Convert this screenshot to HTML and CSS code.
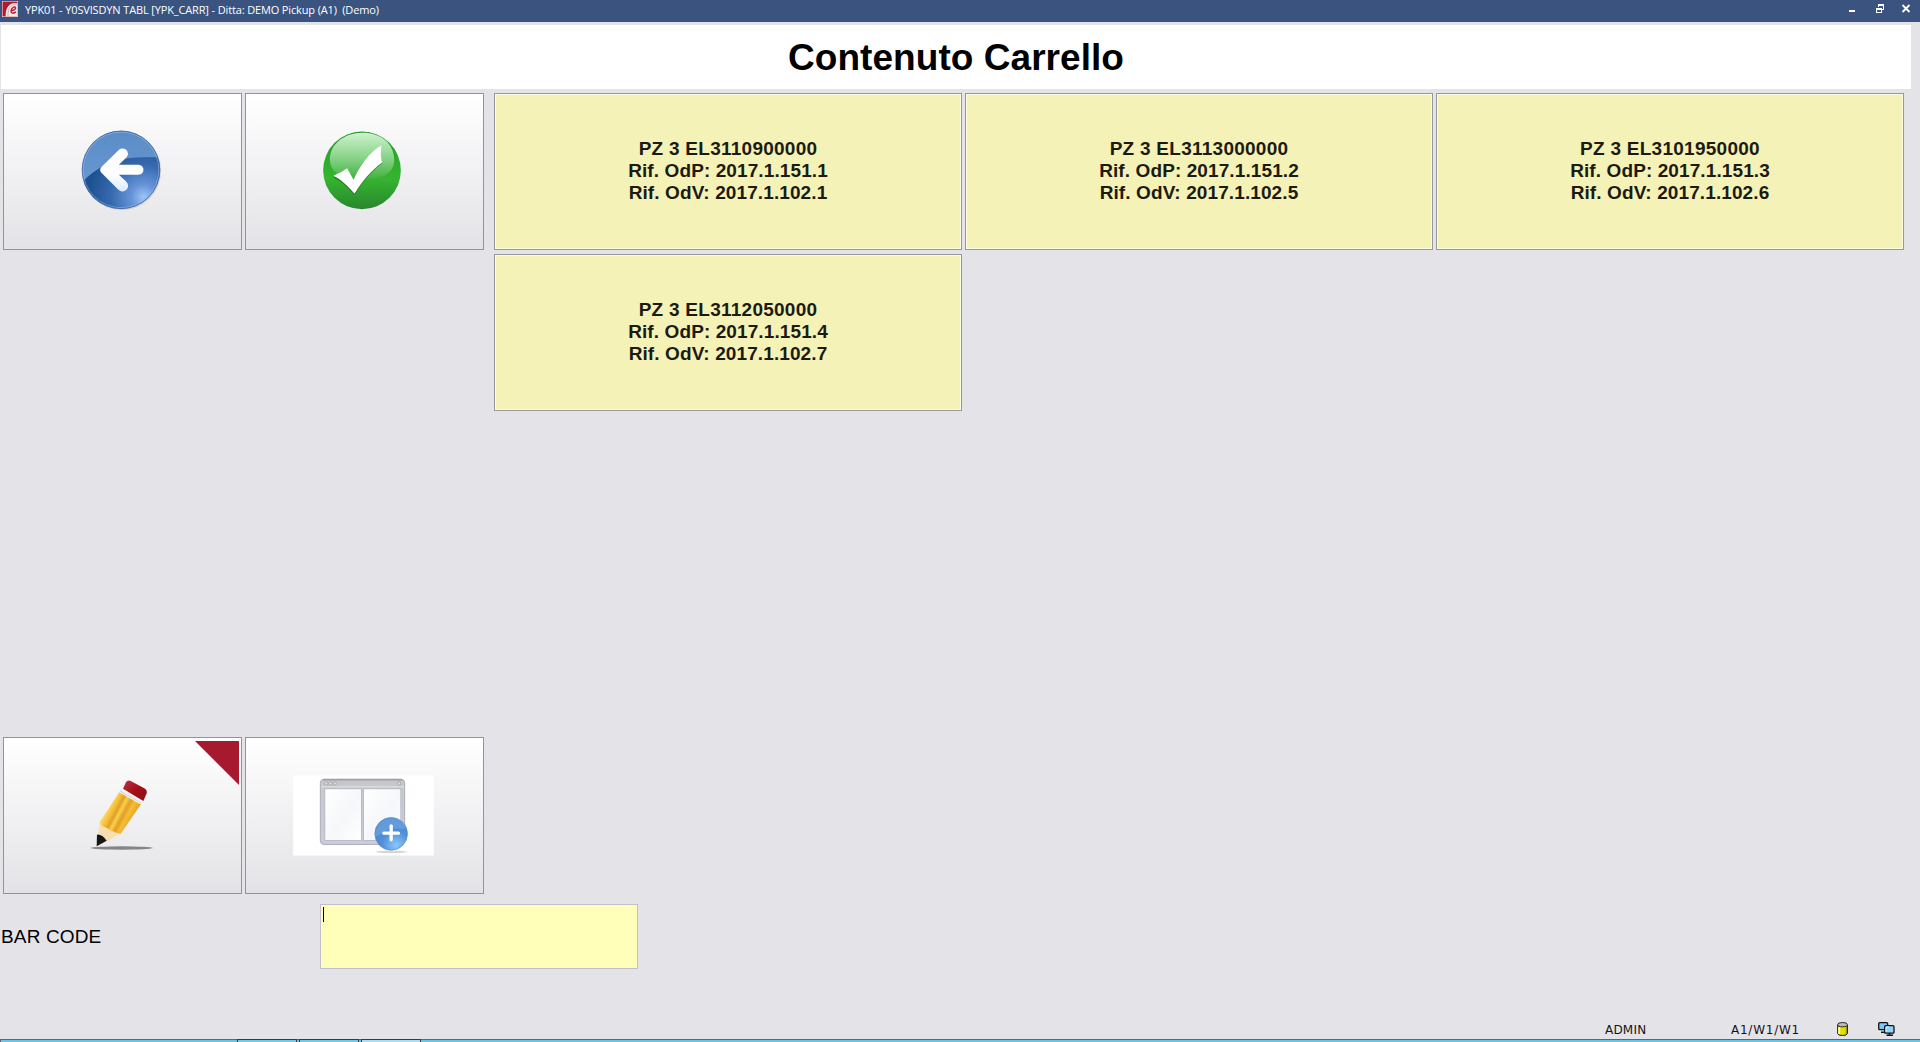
FILE: index.html
```html
<!DOCTYPE html>
<html lang="it">
<head>
<meta charset="utf-8">
<title>Contenuto Carrello</title>
<link rel="stylesheet" href="styles.css">
</head>
<body>
<div class="window">
  <header class="titlebar">
    <svg class="app-icon" viewBox="0 0 16 16">
      <rect width="16" height="16" fill="#fff"/>
      <rect x=".5" y=".5" width="15" height="15" fill="#b5162a"/>
      <path d="M15.500 2.200C8 1 3.400 5.500 3.600 15.500H15.500z" fill="#f1e8e8"/>
      <path d="M15.500 3C9 2.500 5.500 7 6 15.500" fill="none" stroke="#c78d95" stroke-width=".7"/>
      <path d="M9 9.600C12 9.500 14 8 13.500 6.500C12.800 4.800 9.200 7 9 10.200C9 12.600 11.500 12.800 14 10.900" fill="none" stroke="#b5162a" stroke-width="1.400"/>
    </svg>
    <span class="caption">YPK01 - Y0SVISDYN TABL [YPK_CARR] - Ditta: DEMO Pickup (A1)&nbsp; (Demo)</span>
    <svg class="controls" viewBox="0 0 64 12" shape-rendering="crispEdges">
      <rect x="1" y="7" width="6" height="2" fill="#fff"/>
      <path d="M30.500 4V1.500H35.500V6.500H33M30 2H36M28.500 5.500H33.500V9.500H28.500zM28 6H34" fill="none" stroke="#fff"/>
      <path d="M54.500 2L61.500 9M61.500 2L54.500 9" stroke="#fff" stroke-width="1.800" shape-rendering="auto"/>
    </svg>
  </header>

  <h1 class="heading">Contenuto Carrello</h1>

  <main class="content">
    <section class="actions">
      <button class="action">
        <svg width="100" height="100" viewBox="7.5 4.5 300 300">
          <defs>
            <linearGradient id="backTop" x1="0" y1="0" x2="0" y2="1"><stop offset="0" stop-color="#5c8cc6"/><stop offset="1" stop-color="#6c9dd6"/></linearGradient>
            <radialGradient id="backLow" gradientUnits="userSpaceOnUse" cx="222" cy="232" r="165"><stop offset="0" stop-color="#9dc4fa"/><stop offset=".22" stop-color="#6794d8"/><stop offset=".6" stop-color="#3568ad"/><stop offset="1" stop-color="#1d5292"/></radialGradient>
            <linearGradient id="arrowFill" x1="0" y1="0" x2="0" y2="1"><stop offset=".6" stop-color="#fff"/><stop offset="1" stop-color="#dceaff"/></linearGradient>
            <clipPath id="backClip"><circle cx="154.500" cy="151" r="117"/></clipPath>
          </defs>
          <circle cx="157" cy="154" r="118" fill="#bfc0c6" opacity=".6"/>
          <g clip-path="url(#backClip)">
            <rect x="36" y="32" width="238" height="240" fill="url(#backTop)"/>
            <path d="M30 196C56 168 80 150 105 137C150 115 200 112 280 114V280H30z" fill="url(#backLow)"/>
          </g>
          <circle cx="154.500" cy="151" r="113.500" fill="none" stroke="#a9c8ec" stroke-width="2" opacity=".7"/>
          <circle cx="154.500" cy="151" r="116.500" fill="none" stroke="#3f67a3" stroke-width="2.500"/>
          <path d="M95 143L147 92C154 84 170 86 174 97C177 104 175 109 170 115L148 136H207C227 138 227 165 207 166H148L170 186C183 200 172 217 157 216C151 215 147 211 143 207L95 159Q89 151 95 143z" fill="url(#arrowFill)"/>
        </svg>
      </button>
      <button class="action">
        <svg width="100" height="100" viewBox="13.5 4.5 300 300">
          <defs>
            <linearGradient id="okBody" x1="0" y1="0" x2="0" y2="1"><stop offset="0" stop-color="#239a2b"/><stop offset=".6" stop-color="#35b52f"/><stop offset="1" stop-color="#2a862e"/></linearGradient>
            <linearGradient id="okGloss" x1="0" y1="0" x2="0" y2="1"><stop offset="0" stop-color="#cdf2cb"/><stop offset=".5" stop-color="#8ed68f"/><stop offset="1" stop-color="#43b241"/></linearGradient>
          </defs>
          <circle cx="157.500" cy="152.500" r="116.500" fill="url(#okBody)"/>
          <path d="M158 40C215 40 254 72 254 123C254 160 215 178 184 178H125C90 174 61 154 61 119C61 74 105 40 158 40z" fill="url(#okGloss)"/>
          <path d="M72 171Q94 160 112 147L132 181C151 140 181 96 216 77C213 101 214 116 219 130C185 154 161 185 136 224C116 202 98 184 72 171z" fill="#17651d" opacity=".55" transform="translate(-1 3)"/>
          <path d="M72 169Q94 159 113 146L132 181C151 139 181 96 216 78C213 101 214 116 218 129C185 153 159 184 135 223C116 201 98 182 72 169z" fill="#fff"/>
        </svg>
      </button>
      <button class="action edit">
        <svg width="80" height="80" viewBox="247 136 240 240">
          <defs>
            <linearGradient id="wood" gradientUnits="userSpaceOnUse" x1="304" y1="240" x2="395" y2="288"><stop offset="0" stop-color="#dba42f"/><stop offset=".16" stop-color="#ffd75b"/><stop offset=".32" stop-color="#f4bd38"/><stop offset=".42" stop-color="#dea02b"/><stop offset=".52" stop-color="#ffce48"/><stop offset=".64" stop-color="#dea02b"/><stop offset=".76" stop-color="#f7bd32"/><stop offset="1" stop-color="#dda020"/></linearGradient>
            <linearGradient id="eraser" x1="0" y1="0" x2="1" y2="1"><stop offset="0" stop-color="#b63643"/><stop offset=".5" stop-color="#a60d18"/><stop offset="1" stop-color="#87121a"/></linearGradient>
            <filter id="soft" x="-10%" y="-80%" width="120%" height="260%"><feGaussianBlur stdDeviation="3 1.500"/></filter>
          </defs>
          <ellipse cx="366" cy="355" rx="92" ry="5" fill="#858589" filter="url(#soft)"/>
          <path d="M300 276L359 311L331 330L291 350L296 316z" fill="#f7dfaf"/>
          <path d="M292 315Q307 313 321 333L291 350z" fill="#171717"/>
          <path d="M359 187L424 224L363 312C352 313 347 307 340 305C330 304 326 296 317 293C309 292 304 286 300 278z" fill="url(#wood)"/>
          <path d="M366 176L429 213L422 224L359 188z" fill="#f2f2f3"/>
          <path d="M361 184L425 220" stroke="#bfc0c3" stroke-width="2"/>
          <path d="M370 177L379 158Q384 150 393 154L434 176Q443 181 441 191L431 214z" fill="url(#eraser)"/>
        </svg>
      </button>
      <button class="action">
        <svg width="150" height="90" viewBox="28.5 31.5 450 270">
          <defs>
            <linearGradient id="frame" x1="0" y1="0" x2="0" y2="1"><stop offset="0" stop-color="#c5c6c9"/><stop offset=".16" stop-color="#c9cace"/><stop offset="1" stop-color="#c8ccdc"/></linearGradient>
            <linearGradient id="pane" x1="0" y1="0" x2="1" y2="1"><stop offset="0" stop-color="#fff"/><stop offset=".55" stop-color="#f6f7fa"/><stop offset="1" stop-color="#fff"/></linearGradient>
            <radialGradient id="plusBg" cx=".65" cy=".85" r=".8"><stop offset="0" stop-color="#8bc5fc"/><stop offset=".55" stop-color="#508fd9"/><stop offset="1" stop-color="#4d83ca"/></radialGradient>
          </defs>
          <rect x="41" y="48" width="422" height="240" fill="#fff"/>
          <rect x="122.500" y="59" width="253" height="196" rx="11" fill="url(#frame)" stroke="#a2a4ae" stroke-width="2.500"/>
          <path d="M130 61H368" stroke="#85868a" stroke-width="2.500"/>
          <path d="M125 82H373" stroke="#e4e4e7" stroke-width="3"/>
          <g fill="#dddddf" stroke="#96979c" stroke-width="2"><circle cx="140" cy="72" r="5"/><circle cx="153" cy="72" r="5"/><circle cx="166" cy="72" r="5"/><circle cx="359" cy="72" r="5"/></g>
          <g fill="url(#pane)" stroke="#a6a9b8" stroke-width="2"><rect x="136" y="88" width="110" height="155"/><rect x="252" y="88" width="112" height="155"/></g>
          <ellipse cx="335" cy="277" rx="48" ry="4" fill="#d5d5d7"/>
          <circle cx="335" cy="223" r="49" fill="url(#plusBg)" stroke="#5e8dc7" stroke-width="2"/>
          <path d="M287 232C307 227 318 207 340 207H383C376 183 355 176 335 176C308 176 286 197 287 232z" fill="#73a8e2" opacity=".6"/>
          <path d="M335 199V241M313 221H357" stroke="#fff" stroke-width="10" stroke-linecap="round"/>
        </svg>
      </button>
    </section>

    <section class="items">
      <button class="item"><span class="code">PZ 3 EL3110900000</span><br>Rif. OdP: 2017.1.151.1<br>Rif. OdV: 2017.1.102.1</button>
      <button class="item"><span class="code">PZ 3 EL3113000000</span><br>Rif. OdP: 2017.1.151.2<br>Rif. OdV: 2017.1.102.5</button>
      <button class="item"><span class="code">PZ 3 EL3101950000</span><br>Rif. OdP: 2017.1.151.3<br>Rif. OdV: 2017.1.102.6</button>
      <button class="item"><span class="code">PZ 3 EL3112050000</span><br>Rif. OdP: 2017.1.151.4<br>Rif. OdV: 2017.1.102.7</button>
    </section>
  </main>

  <div class="barcode">
    <span class="barcode-label">BAR CODE</span>
    <div class="barcode-field"><span class="caret"></span></div>
  </div>

  <footer class="status">
    <span class="user">ADMIN</span>
    <span class="station">A1/W1/W1</span>
    <svg class="db" viewBox="0 0 12 14">
      <path d="M.700 3V11.500Q1 13.500 5.500 13.500T10.400 11.500V3" fill="#e3e000" stroke="#111"/>
      <path d="M2.200 5V12" stroke="#ffff9a" stroke-width="2"/><path d="M9.300 5V12" stroke="#8f8f00"/>
      <ellipse cx="5.550" cy="2.700" rx="4.850" ry="2.100" fill="#bcbcc0" stroke="#222"/>
    </svg>
    <svg class="net" viewBox="0 0 17 15">
      <rect x=".700" y=".700" width="9" height="7" rx="1" fill="#7cc7f5" stroke="#111" stroke-width="1.300"/>
      <path d="M3 10.300H8" stroke="#111" stroke-width="1.500"/>
      <rect x="6.700" y="3.700" width="9.300" height="7.500" rx="1" fill="#8fd3fa" stroke="#111" stroke-width="1.300"/>
      <path d="M8 10V5H11" fill="none" stroke="#d5f1ff"/>
      <path d="M11.500 11V13M8.500 13.300H15" stroke="#111" stroke-width="1.500"/>
    </svg>
  </footer>

  <div class="taskbar"><i class="task"></i><i class="task"></i><i class="task current"></i></div>
</div>
</body>
</html>
```

FILE: styles.css
```css
* { box-sizing: border-box; }

body {
  margin: 0;
  background: #e4e4e8;
  font-family: "Liberation Sans", Arial, sans-serif;
  color: #000;
}

.window {
  display: flex;
  flex-direction: column;
  width: 1920px;
  height: 1042px;
  overflow: hidden;
}

.titlebar {
  display: flex;
  align-items: flex-start;
  height: 22px;
  padding: 1px 8px 0 2px;
  background: #3b537f;
  color: #fff;
}

.app-icon { width: 16px; height: 16px; }

.caption {
  margin-left: 7px;
  font: 11px/18px "Open Sans", "Noto Sans", sans-serif;
  letter-spacing: -0.14px;
  white-space: nowrap;
}

.controls {
  width: 64px;
  height: 12px;
  margin: 2px 0 0 auto;
}

.heading {
  width: 1910px;
  height: 64px;
  margin: 3px 0 0 1px;
  padding-top: 1px;
  background: #fff;
  font-size: 37px;
  line-height: 64px;
  letter-spacing: 0.05px;
  text-align: center;
}

.content {
  display: flex;
  gap: 10px;
  height: 801px;
  margin: 4px 0 0 3px;
}

.actions {
  display: grid;
  grid-template-columns: 239px 239px;
  grid-template-rows: 157px 157px;
  row-gap: 487px;
  column-gap: 3px;
}

.action {
  display: flex;
  align-items: center;
  justify-content: center;
  padding: 0 1px 1px 0;
  border: 1px solid #949498;
  background: linear-gradient(#fff, #e3e3e7);
}

.action svg { display: block; }

.edit { position: relative; }

.edit::after {
  content: "";
  position: absolute;
  top: 3px;
  right: 2px;
  width: 44px;
  height: 44px;
  background: #a6192e;
  clip-path: polygon(0 0, 100% 0, 100% 100%);
}

.items {
  display: grid;
  grid-template-columns: repeat(3, 468px);
  grid-auto-rows: 157px;
  gap: 4px 3px;
  align-content: start;
}

.item {
  padding: 0 0 1px;
  border: 1px solid #95999c;
  background: #f5f2b8;
  box-shadow: inset 0 0 0 1px #fcfbe4;
  color: #1c1b12;
  font: bold 19px/22px "Liberation Sans", Arial, sans-serif;
  letter-spacing: 0.1px;
}

.code { letter-spacing: 0.26px; }

.barcode {
  display: flex;
  align-items: center;
  height: 65px;
  margin-top: 10px;
}

.barcode-label {
  width: 320px;
  padding: 1px 0 0 1px;
  font-size: 19px;
  letter-spacing: 0.15px;
}

.barcode-field {
  width: 318px;
  height: 65px;
  padding: 2px;
  border: 1px solid #bfc0cc;
  background: #ffffb9;
}

.caret {
  display: block;
  width: 1px;
  height: 15px;
  background: #000;
}

.status {
  display: flex;
  align-items: flex-start;
  height: 24px;
  margin-top: 46px;
  padding-left: 1605px;
  font: 12px/16px "DejaVu Sans", sans-serif;
  color: #151515;
}

.user { width: 126px; padding-top: 7px; letter-spacing: 0.2px; }
.station { width: 106px; padding-top: 7px; letter-spacing: 0.75px; }
.db { width: 12px; height: 14px; margin-top: 7px; }
.net { width: 17px; height: 15px; margin: 7px 0 0 29px; }

.taskbar {
  display: flex;
  gap: 2px;
  height: 3px;
  padding-left: 236px;
  border-top: 1px solid #536b7b;
  border-left: 1px solid #536b7b;
  background: #69c5e1;
}

.task {
  width: 60px;
  height: 3px;
  margin-top: -1px;
  border: 1px solid #244252;
  border-bottom: 0;
  background: #72cbe6;
}

.current { background: #a9dff4; }
```
